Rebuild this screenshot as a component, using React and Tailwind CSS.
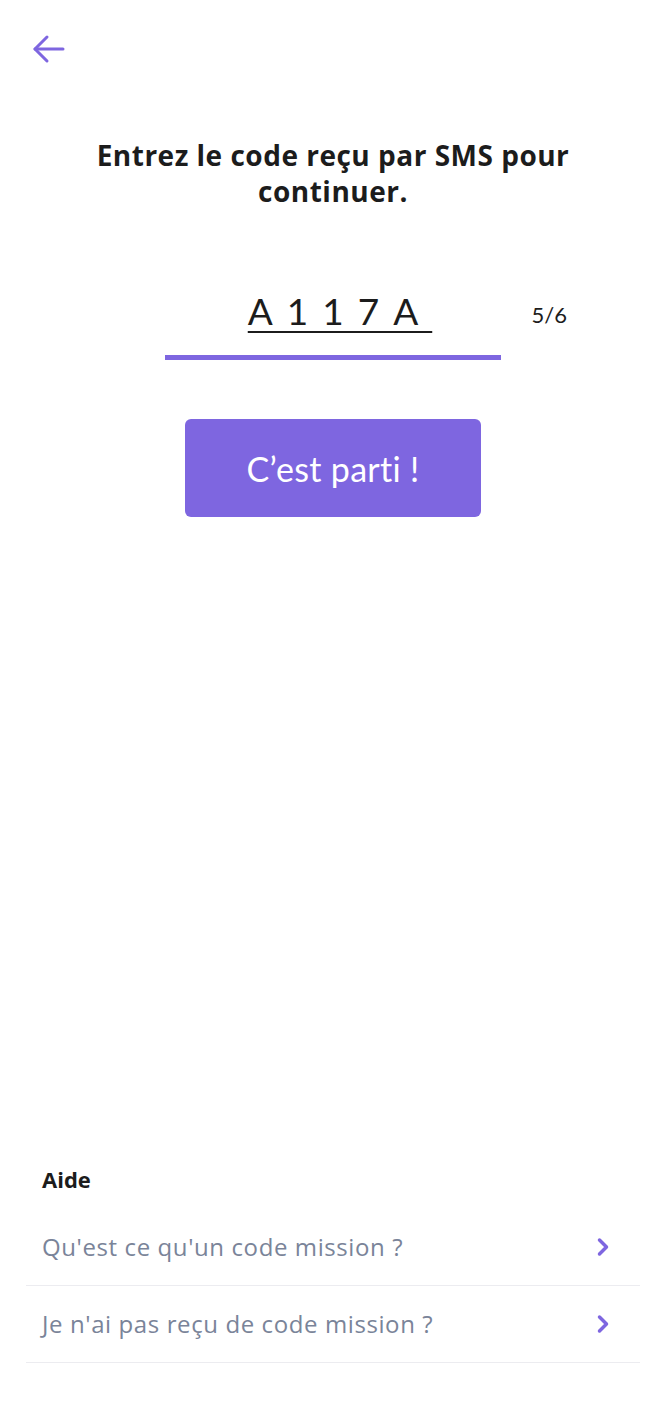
import { ChevronRight } from "lucide-react"

const helpItems = ["Qu'est ce qu'un code mission ?", "Je n'ai pas reçu de code mission ?"]

function App() {
  return (
    <div className="min-h-[1404px] bg-white flex flex-col font-['Open_Sans',sans-serif] text-[#1c1c1c]">
      <div className="px-[32px] pt-[34px]">
        <svg width="34" height="30" viewBox="0 0 34 30" fill="none" stroke="#7E66E0" strokeWidth="3" strokeLinecap="round" strokeLinejoin="round">
          <path d="M31 15H3" />
          <path d="M15 3L3 15l12 12" />
        </svg>
      </div>

      <h1 className="mt-[73px] mx-auto max-w-[540px] text-center text-[28px] leading-[36px] font-bold tracking-[0.5px]">
        Entrez le code reçu par SMS pour continuer.
      </h1>

      <div className="mt-[80px] flex justify-center font-['Lato',sans-serif]">
        <div className="relative w-[336px]">
          <div className="text-center text-[37px] leading-[44px] tracking-[14px] underline underline-offset-[6px] decoration-2 pl-[14px]">
            A117A
          </div>
          <span className="absolute right-[-66px] top-[9px] text-[22px]">5/6</span>
          <div className="mt-[22px] h-[5px] bg-[#7E66E0]" />
        </div>
      </div>

      <div className="mt-[59px] flex justify-center">
        <button className="w-[296px] h-[98px] rounded-[6px] bg-[#7E66E0] text-white text-[34px] font-['Lato',sans-serif] tracking-[0.3px]">
          C’est parti !
        </button>
      </div>

      <div className="flex-1" />

      <div className="px-[26px] pb-[41px]">
        <h2 className="px-[16px] text-[22px] font-bold">Aide</h2>
        <div className="mt-[13px]">
          {helpItems.map((item) => (
            <div key={item} className="flex items-center justify-between h-[77px] pl-[16px] pr-[23px] border-b border-[#ececf0]">
              <span className="text-[24px] tracking-[0.6px] text-[#7a8499]">{item}</span>
              <ChevronRight size={28} strokeWidth={3} color="#7E66E0" />
            </div>
          ))}
        </div>
      </div>
    </div>
  )
}

export default App
